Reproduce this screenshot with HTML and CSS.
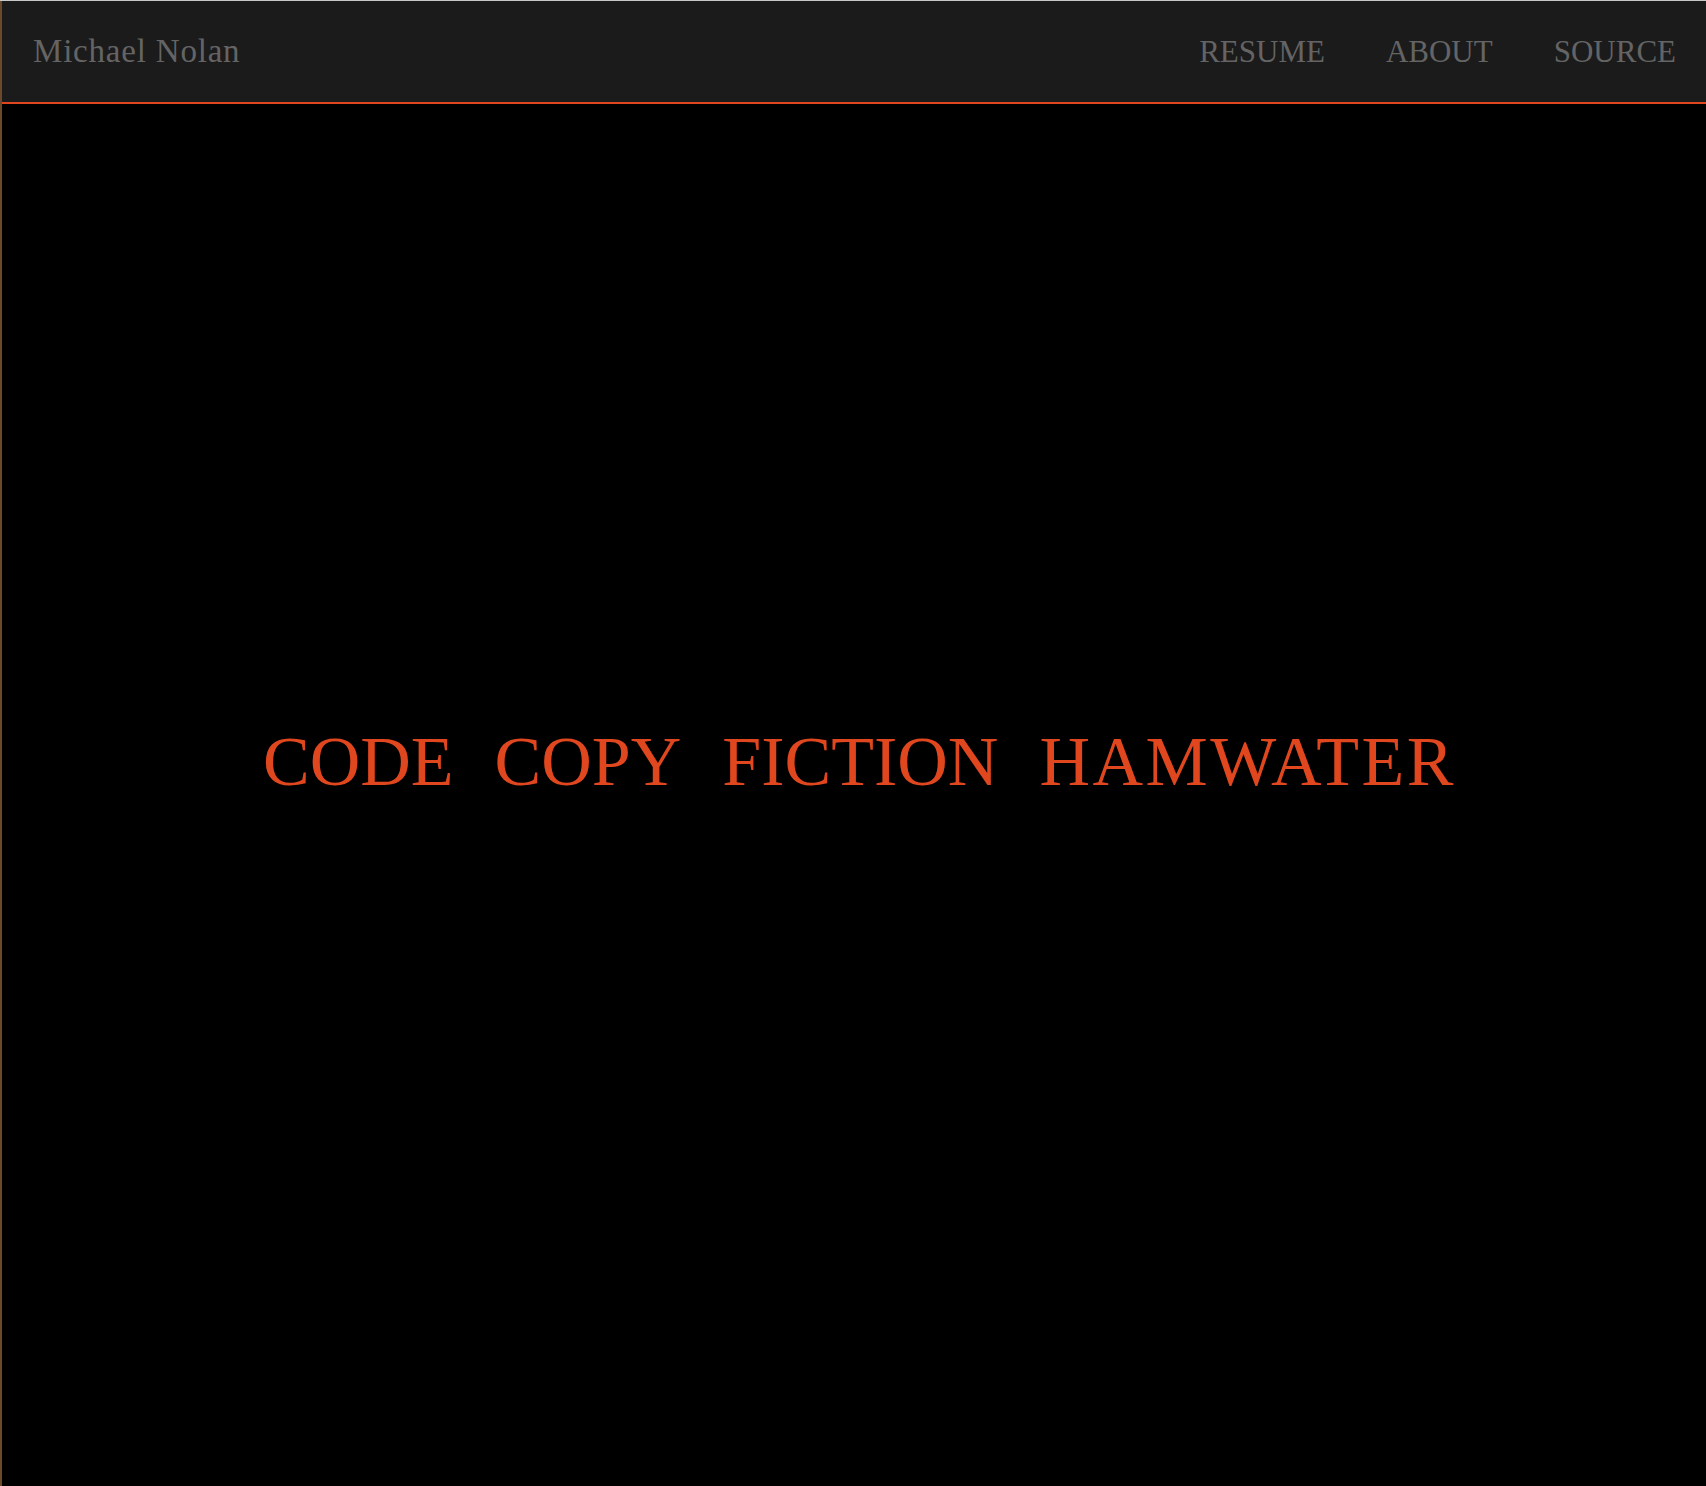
FILE: index.html
```html
<!DOCTYPE html>
<html>
<head>
<meta charset="utf-8">
<link rel="stylesheet" href="styles.css">
</head>
<body>
<div class="page">
  <header class="topbar">
    <a class="brand" href="#">Michael Nolan</a>
    <nav class="nav">
      <a href="#">RESUME</a>
      <a href="#">ABOUT</a>
      <a href="#">SOURCE</a>
    </nav>
  </header>
  <main class="hero">
    <h1 class="tagline"><span>CODE</span><span>COPY</span><span>FICTION</span><span class="wide">HAMWATER</span></h1>
  </main>
</div>
</body>
</html>
```
FILE: styles.css
```css
html, body {
  margin: 0;
  padding: 0;
  height: 100%;
  background: #000;
}
body {
  font-family: "Liberation Serif", "DejaVu Serif", serif;
  border-top: 1px solid #c8c8c8;
  box-sizing: border-box;
}
.page {
  min-height: 100%;
  display: flex;
  flex-direction: column;
  border-left: 2px solid #6a4a2a;
  box-sizing: border-box;
}
.topbar {
  height: 101px;
  background: #1b1b1b;
  border-bottom: 2px solid #e0471f;
  display: flex;
  align-items: center;
  justify-content: space-between;
  padding: 0 30px 0 31px;
}
.topbar a {
  color: #646464;
  text-decoration: none;
}
.brand {
  font-size: 33px;
  letter-spacing: 0.8px;
}
.nav {
  display: flex;
  gap: 61px;
}
.nav a {
  font-size: 31px;
}
.hero {
  flex: 1;
  display: flex;
  align-items: center;
  justify-content: center;
  padding: 0 0 66px 11px;
}
.tagline {
  margin: 0;
  font-weight: normal;
  font-size: 70px;
  color: #e0471f;
  display: flex;
  gap: 41px;
}
.wide {
  letter-spacing: 2.5px;
}
```
